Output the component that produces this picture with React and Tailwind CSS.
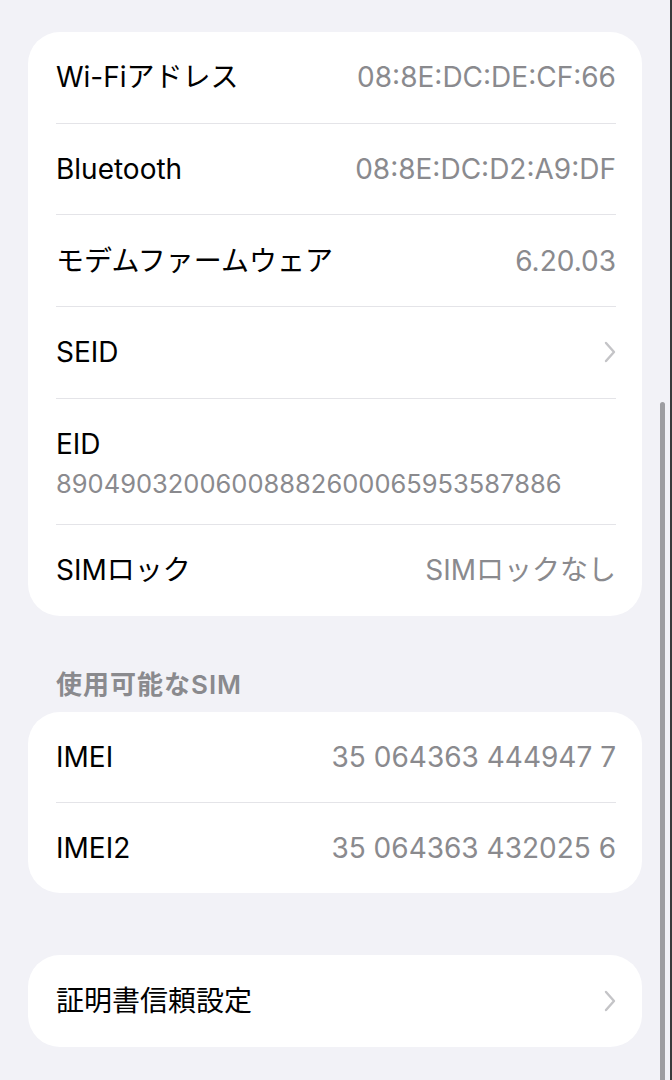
import React from 'react'

const font = { fontFamily: '"Inter", "Noto Sans CJK JP", sans-serif' }

function Chevron() {
  return (
    <svg width="12" height="22" viewBox="0 0 12 22" fill="none" className="shrink-0">
      <path d="M2 2 L10 11 L2 20" stroke="#c4c4c7" strokeWidth="2.4" strokeLinecap="round" strokeLinejoin="round" />
    </svg>
  )
}

// heights are border-box, so the divider is inside the row height
function Row({ label, value, chevron, last, h = 'h-[91.7px]' }) {
  return (
    <div
      className={`flex items-center justify-between ${h} ${last ? '' : 'border-b border-[#e4e4e8]'}`}
    >
      <span className="text-[28px] leading-[36px] text-black">{label}</span>
      {value && <span className="text-[28px] leading-[36px] text-[#8a8a8e]">{value}</span>}
      {chevron && <Chevron />}
    </div>
  )
}

export default function App() {
  return (
    <div
      style={font}
      className="relative h-[1080px] overflow-hidden bg-[#f2f2f7] border-r-2 border-[#3a3a3c]"
    >
      <div className="pl-[28px] pr-[28px] pt-[32px]">
        {/* Device info */}
        <div className="bg-white rounded-[32px] pl-[28px] pr-[26px]">
          <Row label="Wi-Fiアドレス" value="08:8E:DC:DE:CF:66" />
          <Row label="Bluetooth" value="08:8E:DC:D2:A9:DF" />
          <Row label="モデムファームウェア" value="6.20.03" />
          <Row label="SEID" chevron />
          <div className="h-[126px] pt-[27px] border-b border-[#e4e4e8]">
            <div className="text-[28px] leading-[36px] text-black">EID</div>
            <div className="mt-[4px] text-[25.5px] leading-[36px] text-[#8a8a8e]">
              89049032006008882600065953587886
            </div>
          </div>
          <Row label="SIMロック" value="SIMロックなし" last h="h-[91px]" />
        </div>

        {/* Available SIM */}
        <div className="mt-[53px] pl-[28px] text-[26px] leading-[32px] font-semibold tracking-[1px] text-[#8a8a8e]">
          使用可能なSIM
        </div>
        <div className="mt-[11px] bg-white rounded-[32px] pl-[28px] pr-[26px]">
          <Row label="IMEI" value="35 064363 444947 7" h="h-[91px]" />
          <Row label="IMEI2" value="35 064363 432025 6" last h="h-[90px]" />
        </div>

        {/* Certificates */}
        <div className="mt-[62px] bg-white rounded-[32px] pl-[28px] pr-[26px]">
          <Row label="証明書信頼設定" chevron last h="h-[92px]" />
        </div>
      </div>

      {/* scroll indicator */}
      <div className="absolute right-[5px] top-[402px] bottom-0 w-[5px] rounded-t-full bg-[#9d9da1]" />
    </div>
  )
}
